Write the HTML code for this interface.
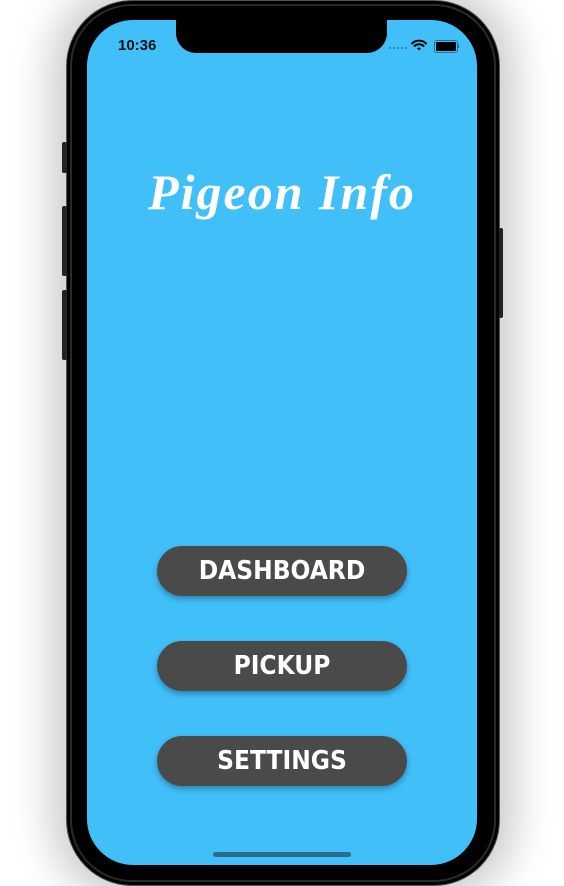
<!DOCTYPE html>
<html><head><meta charset="utf-8"><style>
html,body{margin:0;padding:0;width:564px;height:886px;background:#fff;overflow:hidden;position:relative;font-family:"Liberation Sans",sans-serif}
.shadow{position:absolute;left:66px;top:0;width:434px;height:886px;border-radius:66px;box-shadow:0 0 40px 16px rgba(0,0,0,0.2)}
.phone{position:absolute;left:66px;top:0;width:434px;height:886px;border-radius:66px;background:#000;border:1px solid #555;box-sizing:border-box}
.phone:before{content:"";position:absolute;left:3px;top:3px;right:3px;bottom:3px;border-radius:62px;border:2px solid #2a2a2a}
.side{position:absolute;background:#222;border-radius:2px}
.screen{position:absolute;left:87px;top:20px;width:390px;height:845px;border-radius:46px;background:#40bff9;overflow:hidden}
.notch{position:absolute;left:89px;top:-2px;width:211px;height:35px;background:#000;border-radius:0 0 20px 20px}
.time{position:absolute;left:31px;top:17px;font-size:15px;font-weight:bold;color:#111}
.title{position:absolute;left:0;right:0;top:143px;text-align:center;font-family:"Liberation Serif",serif;font-style:italic;font-weight:bold;font-size:50px;letter-spacing:2px;color:#fff}
.btn{position:absolute;left:70px;width:250px;height:50px;border-radius:25px;background:#4a4a4a;color:#fff;font-weight:bold;font-size:26px;text-align:center;line-height:51px;box-shadow:0 3px 6px rgba(0,0,0,0.3);font-family:"DejaVu Sans Condensed","Liberation Sans",sans-serif}
.home{position:absolute;left:126px;top:832px;width:138px;height:5px;border-radius:3px;background:#2b6d8c}
</style></head><body>
<div class="shadow"></div>
<div class="phone"></div>
<div class="side" style="left:62px;top:142px;width:5px;height:31px"></div>
<div class="side" style="left:62px;top:206px;width:5px;height:70px"></div>
<div class="side" style="left:62px;top:290px;width:5px;height:70px"></div>
<div class="side" style="left:499px;top:228px;width:4px;height:90px"></div>
<div class="screen">
  <div class="notch"></div>
  <div class="time">10:36</div>
  <div style="position:absolute;left:302px;top:27px;width:18px;height:2px;border-top:2px dotted #3a8ab0"></div>
  <svg style="position:absolute;left:324px;top:19px" width="16" height="12" viewBox="0 0 16 12"><path d="M1 4.5a10 10 0 0 1 14 0M3.5 7a6.5 6.5 0 0 1 9 0" stroke="#000" stroke-width="2" fill="none" stroke-linecap="round"/><path d="M6 9.3a3 3 0 0 1 4 0L8 11.5z" fill="#000"/></svg>
  <div style="position:absolute;left:347px;top:20px;width:20px;height:9px;border:1px solid #2a6d8e;border-radius:3px;padding:1px;box-sizing:content-box"><div style="width:100%;height:100%;background:#000;border-radius:1px"></div></div>
  <div style="position:absolute;left:370px;top:24px;width:2px;height:4px;background:#2a6d8e"></div>
  <div class="title">Pigeon Info</div>
  <div class="btn" style="top:526px">DASHBOARD</div>
  <div class="btn" style="top:621px">PICKUP</div>
  <div class="btn" style="top:716px">SETTINGS</div>
  <div class="home"></div>
</div>
</body></html>
